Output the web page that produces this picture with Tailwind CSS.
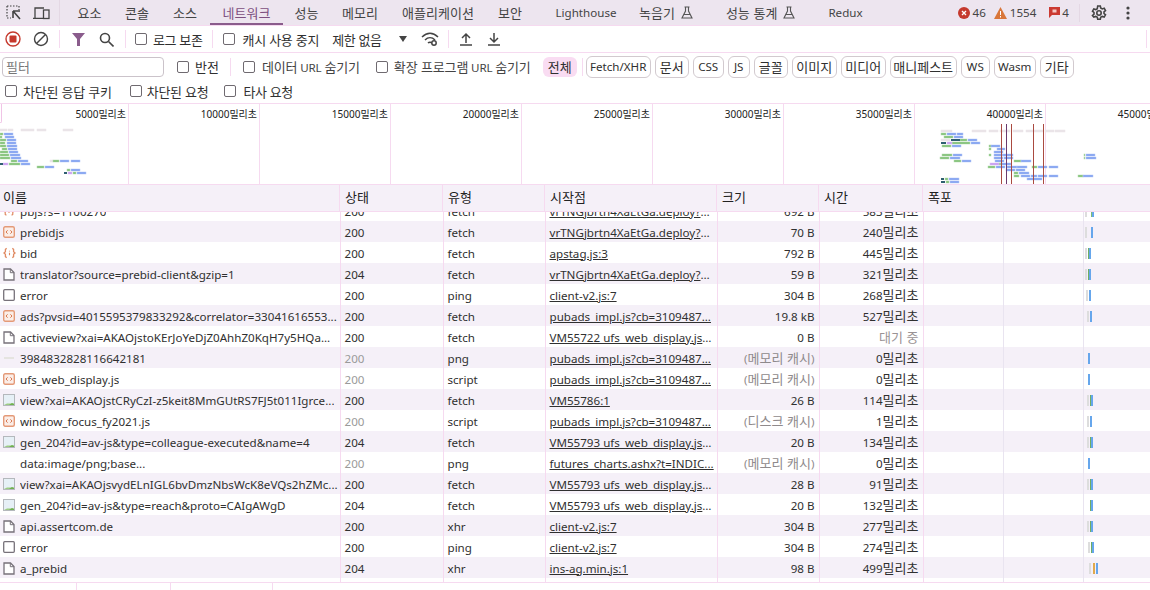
<!DOCTYPE html>
<html lang="ko">
  <head>
    <meta charset="UTF-8" />
    <title>DevTools - 네트워크</title>
    <script src="https://cdn.jsdelivr.net/npm/@tailwindcss/browser@4"></script>
  </head>
  <body class="w-[1150px] h-[590px] overflow-hidden bg-white text-[11.6px] leading-none text-[#303030] font-['Noto_Sans','Noto_Sans_CJK_KR',sans-serif] [&_.k]:text-[13px] [&_.k]:font-['Noto_Sans_CJK_KR',sans-serif]">
    <!-- 아이콘 -->
    <svg class="hidden">
      <symbol id="script" viewBox="0 0 12 12"><rect x="0.7" y="0.7" width="10.6" height="10.6" rx="1.5" fill="#fbeee8" stroke="#e49a78" stroke-width="1.4"/><path d="M4.600 4.300 3 6l1.600 1.700M7.400 4.300 9 6 7.400 7.700" fill="none" stroke="#d9774e" stroke-width="1"/></symbol>
      <symbol id="json" viewBox="0 0 14 12"><path d="M4 1 2.600 2v2.600L1 6l1.600 1.400V10L4 11M10 1l1.400 1v2.600L13 6l-1.600 1.400V10L10 11" fill="none" stroke="#e08a62" stroke-width="1.400"/><path d="M7 3.500v1M7 5.800v2.500" stroke="#e08a62" stroke-width="1.200"/></symbol>
      <symbol id="file" viewBox="0 0 12 13"><path d="M1 1h6.500L11 4.500V12H1z" fill="#fff" stroke="#77727a" stroke-width="1.300"/><path d="M7.300 1v3.700H11" fill="none" stroke="#77727a" stroke-width="1"/></symbol>
      <symbol id="blank" viewBox="0 0 12 12"><rect x="0.7" y="0.7" width="10.6" height="10.6" rx="1" fill="#fff" stroke="#77727a" stroke-width="1.300"/></symbol>
      <symbol id="image" viewBox="0 0 12 12"><rect x="0.5" y="0.5" width="11" height="11" fill="#e6f0f6" stroke="#b4b8bc"/><path d="M1 11 4 9.500 11 9.500V11z" fill="#9ccb83"/><path d="M6 11l3-2 2 1v1z" fill="#6fb04f"/></symbol>
      <symbol id="flask" viewBox="0 0 12 13"><path d="M3.500 1h5M4.500 1v4L1 12h10L7.500 5V1M3 8.500h6" fill="none" stroke="#555" stroke-width="1.100"/></symbol>
    </svg>

    <!-- 탭 -->
    <div class="flex items-center h-[26px] bg-[#ede5ef] border-b border-[#f6daf0] text-[#444]">
      <div class="flex items-center w-[60px] h-full border-r border-[#e4d8e4]">
        <svg class="ml-[6px]" width="16" height="16" viewBox="0 0 16 16" fill="none" stroke="#444"><path d="M1 1h12M1 1v11M1 13h4M13 1v4" stroke-dasharray="1.500 1.500" stroke-width="1.200"/><path d="M7 6h7M7 6v7M7.500 6.500 14 14" stroke-width="1.600"/></svg>
        <svg class="ml-[11px]" width="17" height="14" viewBox="0 0 17 14" fill="none" stroke="#444" stroke-width="1.300"><path d="M2 12V2h9M0 12.300h10"/><rect x="10.500" y="4" width="5.500" height="8.500" fill="#ede5ef"/></svg>
      </div>
      <div class="flex items-center h-full pl-[6px]">
        <div class="k w-[47px] text-center">요소</div>
        <div class="k w-[48px] text-center">콘솔</div>
        <div class="k w-[48px] text-center">소스</div>
        <div class="k flex items-center justify-center w-[73px] ml-[1px] h-full pt-[2px] border-b-2 border-[#8a5c8c] text-[#7d4f80]">네트워크</div>
        <div class="k w-[47px] text-center">성능</div>
        <div class="k w-[60px] text-center">메모리</div>
        <div class="k w-[96px] text-center">애플리케이션</div>
        <div class="k w-[48px] text-center">보안</div>
        <div class="w-[82px] ml-[11px] text-center">Lighthouse</div>
        <div class="flex items-center ml-[12px]"><span class="k">녹음기</span><svg class="ml-[6px]" width="12" height="13"><use href="#flask"/></svg></div>
        <div class="flex items-center ml-[33px]"><span class="k">성능 통계</span><svg class="ml-[6px]" width="12" height="13"><use href="#flask"/></svg></div>
        <div class="ml-[33px]">Redux</div>
      </div>
      <div class="flex items-center ml-auto h-full">
        <svg width="12" height="12" viewBox="0 0 12 12"><circle cx="6" cy="6" r="6" fill="#c5392d"/><path d="M4 4l4 4M8 4l-4 4" stroke="#fff" stroke-width="1.300"/></svg>
        <span class="ml-[3px]">46</span>
        <svg class="ml-[8px]" width="13" height="12" viewBox="0 0 13 12"><path d="M6.500 0 13 12H0z" fill="#d9763a"/><path d="M6.500 4v4M6.500 9v1.500" stroke="#fff"/></svg>
        <span class="ml-[3px]">1554</span>
        <svg class="ml-[13px]" width="11" height="11" viewBox="0 0 11 11"><path d="M0 0h11v8H3l-3 3z" fill="#cb3a32"/><rect x="3.500" y="2.500" width="4" height="3" fill="#f3c9c5"/></svg>
        <span class="ml-[2px] mr-[10px]">4</span>
        <div class="w-px h-[18px] bg-[#e4d8e4]"></div>
        <svg class="ml-[11px]" width="16" height="16" viewBox="0 0 16 16" fill="none" stroke="#444" stroke-width="1.600"><circle cx="8" cy="8" r="2.200"/><path d="M6.700 1h2.600l.4 2 1.600.9 1.900-.7 1.300 2.300-1.500 1.300v1.700l1.500 1.300-1.300 2.300-1.900-.7-1.600.9-.4 2H6.700l-.4-2-1.600-.9-1.900.7L1.500 10.500 3 9.200V7.500L1.500 6.200l1.300-2.300 1.900.7 1.600-.9z"/></svg>
        <svg class="ml-[19px]" width="4" height="14" viewBox="0 0 4 14" fill="#444"><circle cx="2" cy="2" r="1.600"/><circle cx="2" cy="7" r="1.600"/><circle cx="2" cy="12" r="1.600"/></svg>
        <div class="w-[20px]"></div>
      </div>
    </div>

    <!-- 툴바 -->
    <div class="flex items-center h-[27px] border-b border-[#f6daf0]">
      <svg class="ml-[5px]" width="16" height="16" viewBox="0 0 16 16"><circle cx="8" cy="8" r="7" fill="none" stroke="#c5392d" stroke-width="1.400"/><rect x="4.500" y="4.500" width="7" height="7" rx="1" fill="#c5392d"/></svg>
      <svg class="ml-[12px]" width="16" height="16" viewBox="0 0 16 16" fill="none" stroke="#444" stroke-width="1.400"><circle cx="8" cy="8" r="6.500"/><path d="M3.500 12.500 12.500 3.500"/></svg>
      <div class="w-px h-[18px] ml-[10px] bg-[#f6daf0]"></div>
      <svg class="ml-[12px]" width="13" height="13" viewBox="0 0 13 13" fill="#8a5c8c"><path d="M0 0h13L8 6v7H5V6z"/></svg>
      <svg class="ml-[14px]" width="15" height="15" viewBox="0 0 15 15" fill="none" stroke="#444" stroke-width="1.600"><circle cx="6" cy="6" r="4.500"/><path d="m9.500 9.500 5 5"/></svg>
      <div class="w-px h-[18px] ml-[11px] bg-[#f6daf0]"></div>
      <label class="flex items-center ml-[9px]"><input type="checkbox" class="appearance-none w-[12px] h-[12px] border border-[#6f6a70] rounded-[2px]" /><span class="k ml-[6px] tracking-[-0.4px]">로그 보존</span></label>
      <div class="w-px h-[18px] ml-[10px] bg-[#f6daf0]"></div>
      <label class="flex items-center ml-[10px]"><input type="checkbox" class="appearance-none w-[12px] h-[12px] border border-[#6f6a70] rounded-[2px]" /><span class="k ml-[7px] tracking-[-0.3px]">캐시 사용 중지</span></label>
      <span class="k ml-[13px] tracking-[-0.4px]">제한 없음</span>
      <svg class="ml-[17px]" width="8" height="6" viewBox="0 0 8 6" fill="#444"><path d="M0 0h8L4 6z"/></svg>
      <svg class="ml-[14px]" width="18" height="14" viewBox="0 0 18 14" fill="none" stroke="#444" stroke-width="1.500"><path d="M1 5c5-5 11-5 16 0M4 8c3-3 7-3 10 0M7 11c1-1 3-1 4 0"/><circle cx="13" cy="11" r="2.200" fill="#fff"/></svg>
      <div class="w-px h-[18px] ml-[9px] bg-[#f6daf0]"></div>
      <svg class="ml-[11px]" width="12" height="14" viewBox="0 0 12 14" fill="none" stroke="#444" stroke-width="1.500"><path d="M6 11V2M2 6l4-4 4 4M0 13h12"/></svg>
      <svg class="ml-[16px]" width="12" height="14" viewBox="0 0 12 14" fill="none" stroke="#444" stroke-width="1.500"><path d="M6 1v9M2 6l4 4 4-4M0 13h12"/></svg>
      <div class="w-px h-[18px] ml-auto mr-[3px] bg-[#f6daf0]"></div>
    </div>

    <!-- 필터 -->
    <div class="flex items-center h-[25px] mt-[1px]">
      <input placeholder="필터" class="k w-[162px] h-[20px] ml-[2px] px-[3px] border border-[#cbc3ca] rounded-[4px] placeholder:text-[#777]" />
      <input type="checkbox" class="appearance-none w-[12px] h-[12px] ml-[13px] border border-[#6f6a70] rounded-[2px]" />
      <span class="k ml-[6px]">반전</span>
      <div class="w-px h-[18px] ml-[11px] bg-[#f6daf0]"></div>
      <input type="checkbox" class="appearance-none w-[12px] h-[12px] ml-[12px] border border-[#6f6a70] rounded-[2px]" />
      <span class="ml-[7px] text-[#444] tracking-[-0.15px]"><span class="k">데이터</span> URL <span class="k">숨기기</span></span>
      <input type="checkbox" class="appearance-none w-[12px] h-[12px] ml-[16px] border border-[#6f6a70] rounded-[2px]" />
      <span class="ml-[6px] text-[#444] tracking-[-0.15px]"><span class="k">확장 프로그램</span> URL <span class="k">숨기기</span></span>
      <span class="k flex items-center justify-center w-[34px] h-[20px] ml-[12px] rounded-[6px] bg-[#f9dcf2]">전체</span>
      <div class="w-px h-[18px] ml-[5px] bg-[#f6daf0]"></div>
      <div class="flex items-center gap-[4px] ml-[3px] [&>span]:flex [&>span]:items-center [&>span]:justify-center [&>span]:h-[22px] [&>span]:border [&>span]:border-[#d2cacf] [&>span]:rounded-[6px]">
        <span class="w-[65px]">Fetch/XHR</span>
        <span class="k w-[34px]">문서</span>
        <span class="w-[31px]">CSS</span>
        <span class="w-[22px]">JS</span>
        <span class="k w-[34px]">글꼴</span>
        <span class="k w-[45px]">이미지</span>
        <span class="k w-[45px]">미디어</span>
        <span class="k w-[67px]">매니페스트</span>
        <span class="w-[29px]">WS</span>
        <span class="w-[42px]">Wasm</span>
        <span class="k w-[34px]">기타</span>
      </div>
    </div>
    <div class="flex items-center h-[25px] border-b border-[#f6daf0]">
      <input type="checkbox" class="appearance-none w-[12px] h-[12px] ml-[5px] border border-[#6f6a70] rounded-[2px]" />
      <span class="k ml-[6px] tracking-[-0.25px]">차단된 응답 쿠키</span>
      <input type="checkbox" class="appearance-none w-[12px] h-[12px] ml-[18px] border border-[#6f6a70] rounded-[2px]" />
      <span class="k ml-[5px] tracking-[-0.3px]">차단된 요청</span>
      <input type="checkbox" class="appearance-none w-[12px] h-[12px] ml-[16px] border border-[#6f6a70] rounded-[2px]" />
      <span class="k ml-[7px] tracking-[-0.4px]">타사 요청</span>
    </div>

    <!-- 개요 타임라인 -->
    <div class="relative h-[81px] border-b border-[#f6daf0] overflow-hidden">
      <div class="flex h-full text-right text-[10px] text-[#222] [&_.k]:!text-[10px] [&>div]:shrink-0 [&>div]:h-[81px] [&>div]:pt-[5px] [&>div]:pr-[2px] [&>div]:border-r [&>div]:border-[#f6daf0]">
        <div class="w-[129px]">5000<span class="k">밀리초</span></div>
        <div class="w-[131px]">10000<span class="k">밀리초</span></div>
        <div class="w-[131px]">15000<span class="k">밀리초</span></div>
        <div class="w-[131px]">20000<span class="k">밀리초</span></div>
        <div class="w-[131px]">25000<span class="k">밀리초</span></div>
        <div class="w-[131px]">30000<span class="k">밀리초</span></div>
        <div class="w-[131px]">35000<span class="k">밀리초</span></div>
        <div class="w-[131px]">40000<span class="k">밀리초</span></div>
        <div class="w-[131px]">45000<span class="k">밀리초</span></div>
      </div>
      <div class="absolute left-0 top-0 w-[2px] h-[19px] border-r border-b border-[#f0c4e6] rounded-br-[2px]"></div>
      <!-- 요청 막대: x는 화면 좌표, y는 개요 영역 기준 -->
      <svg class="absolute left-0 top-0" width="1150" height="81" stroke-width="0.5">
        <g fill="#eae4e8" stroke="#eae4e8">
          <rect x="0" y="25" width="7" height="2"/><rect x="8" y="25" width="5" height="2"/><rect x="21" y="25" width="13" height="2"/><rect x="37" y="25" width="9" height="2"/><rect x="63" y="25" width="10" height="2"/><rect x="50" y="56" width="3" height="2"/>
          <rect x="941" y="26" width="11" height="2"/><rect x="972" y="26" width="14" height="2"/><rect x="989" y="26" width="9" height="2"/><rect x="1000" y="26" width="10" height="2"/><rect x="1013" y="26" width="10" height="2"/><rect x="1026" y="26" width="7" height="2"/><rect x="1034" y="26" width="9" height="2"/><rect x="1045" y="26" width="9" height="2"/><rect x="1055" y="26" width="10" height="2"/><rect x="941" y="35" width="9" height="2"/>
        </g>
        <g fill="#7fbf74" stroke="#b5dcae">
          <rect x="0" y="29" width="3" height="2"/><rect x="0" y="32" width="2" height="2"/><rect x="0" y="35" width="6" height="2"/><rect x="0" y="38" width="5" height="2"/><rect x="0" y="41" width="6" height="2"/><rect x="2" y="44" width="5" height="2"/><rect x="0" y="47" width="8" height="2"/><rect x="0" y="50" width="9" height="2"/><rect x="0" y="53" width="10" height="2"/><rect x="11" y="56" width="6" height="2"/><rect x="53" y="56" width="6" height="2"/><rect x="9" y="59" width="11" height="2"/><rect x="37" y="62" width="7" height="2"/><rect x="67" y="65" width="3" height="2"/><rect x="73" y="68" width="3" height="2"/>
          <rect x="941" y="29" width="5" height="2"/><rect x="944" y="32" width="9" height="2"/><rect x="960" y="35" width="7" height="2"/><rect x="952" y="38" width="18" height="2"/><rect x="942" y="41" width="9" height="2"/><rect x="989" y="41" width="2" height="2"/><rect x="989" y="44" width="2" height="2"/><rect x="942" y="50" width="10" height="2"/><rect x="989" y="50" width="2" height="2"/><rect x="1084" y="50" width="1" height="2"/><rect x="940" y="53" width="9" height="2"/><rect x="1084" y="53" width="1" height="2"/><rect x="954" y="56" width="7" height="2"/><rect x="1014" y="56" width="7" height="2"/><rect x="999" y="59" width="2" height="2"/><rect x="988" y="62" width="7" height="2"/><rect x="1032" y="62" width="5" height="2"/><rect x="1014" y="68" width="4" height="2"/><rect x="1014" y="71" width="5" height="2"/><rect x="1078" y="71" width="5" height="2"/><rect x="945" y="74" width="3" height="2"/><rect x="946" y="77" width="3" height="2"/>
        </g>
        <g fill="#7f9ff0" stroke="#b5c8f5">
          <rect x="4" y="29" width="9" height="2"/><rect x="5" y="32" width="9" height="2"/><rect x="7" y="35" width="9" height="2"/><rect x="7" y="38" width="9" height="2"/><rect x="7" y="41" width="10" height="2"/><rect x="8" y="44" width="9" height="2"/><rect x="9" y="47" width="9" height="2"/><rect x="10" y="50" width="10" height="2"/><rect x="11" y="53" width="10" height="2"/><rect x="18" y="56" width="10" height="2"/><rect x="60" y="56" width="9" height="2"/><rect x="71" y="56" width="9" height="2"/><rect x="21" y="59" width="9" height="2"/><rect x="45" y="62" width="9" height="2"/><rect x="71" y="65" width="9" height="2"/><rect x="77" y="68" width="9" height="2"/>
          <rect x="947" y="29" width="9" height="2"/><rect x="957" y="29" width="6" height="2"/><rect x="954" y="32" width="9" height="2"/><rect x="968" y="35" width="9" height="2"/><rect x="971" y="38" width="9" height="2"/><rect x="952" y="41" width="9" height="2"/><rect x="991" y="41" width="9" height="2"/><rect x="997" y="44" width="8" height="2"/><rect x="994" y="47" width="9" height="2"/><rect x="953" y="50" width="9" height="2"/><rect x="994" y="50" width="9" height="2"/><rect x="1003" y="50" width="10" height="2"/><rect x="1086" y="50" width="9" height="2"/><rect x="950" y="53" width="10" height="2"/><rect x="994" y="53" width="9" height="2"/><rect x="1004" y="53" width="9" height="2"/><rect x="1086" y="53" width="10" height="2"/><rect x="962" y="56" width="9" height="2"/><rect x="995" y="56" width="9" height="2"/><rect x="1021" y="56" width="10" height="2"/><rect x="1001" y="59" width="10" height="2"/><rect x="996" y="62" width="9" height="2"/><rect x="1007" y="62" width="10" height="2"/><rect x="1017" y="62" width="10" height="2"/><rect x="1038" y="62" width="9" height="2"/><rect x="1049" y="62" width="9" height="2"/><rect x="1006" y="65" width="9" height="2"/><rect x="1016" y="65" width="9" height="2"/><rect x="1019" y="68" width="10" height="2"/><rect x="1021" y="71" width="9" height="2"/><rect x="1031" y="71" width="6" height="2"/><rect x="1038" y="71" width="9" height="2"/><rect x="1049" y="71" width="9" height="2"/><rect x="1083" y="71" width="10" height="2"/><rect x="949" y="74" width="10" height="2"/><rect x="1027" y="74" width="15" height="2"/><rect x="950" y="77" width="9" height="2"/>
        </g>
        <g fill="#c79af0" stroke="#dcc2f5">
          <rect x="3" y="59" width="5" height="2"/><rect x="68" y="68" width="4" height="2"/><rect x="947" y="38" width="5" height="2"/><rect x="990" y="59" width="9" height="2"/>
        </g>
        <g fill="#2f5f70">
          <rect x="0" y="59" width="3" height="2"/><rect x="64" y="68" width="3" height="2"/><rect x="951" y="35" width="9" height="2"/><rect x="941" y="38" width="5" height="2"/><rect x="941" y="74" width="3" height="2"/><rect x="941" y="77" width="4" height="2"/>
        </g>
        <g fill="#aa4a40">
          <rect x="1001" y="20" width="1" height="60"/><rect x="1011" y="20" width="1" height="60"/><rect x="1033" y="20" width="1" height="60"/><rect x="1043" y="20" width="1" height="60"/>
        </g>
        <rect x="1006" y="20" width="1" height="60" fill="#6a3a6e"/>
      </svg>
    </div>

    <!-- 표 헤더 -->
    <div class="flex items-center h-[27px] bg-[#f5f0f8] border-b border-[#f6daf0] text-[#222] [&>div]:flex [&>div]:items-center [&>div]:h-full [&>div]:pb-[3px] [&>div]:border-r [&>div]:border-[#f6daf0] [&>div]:pl-[5px]">
      <div class="k w-[340px] !pl-[3px]">이름</div>
      <div class="k w-[103px]">상태</div>
      <div class="k w-[102px]">유형</div>
      <div class="k w-[172px]">시작점</div>
      <div class="k w-[102px]">크기</div>
      <div class="k w-[104px]">시간</div>
      <div class="k grow !border-r-0">폭포</div>
    </div>

    <!-- 요청 목록 -->
    <div class="relative h-[371px] overflow-hidden border-b border-[#f6daf0]">
      <table class="w-[1150px] -mt-[12px] table-fixed border-collapse leading-[15px] [&_tr]:h-[21px] [&_tr:nth-child(even)]:bg-[#f5f0f8] [&_td]:p-0 [&_td]:pt-[1px] [&_td]:truncate [&_td]:border-r [&_td]:border-[#f6daf0] [&_td:last-child]:border-r-0 [&_td:nth-child(n+2):nth-child(-n+4)]:pl-[4px] [&_td:nth-child(5)]:text-right [&_td:nth-child(5)]:pr-[4px] [&_td:nth-child(6)]:text-right [&_td:nth-child(6)]:pr-[4px] [&_td:nth-child(4)]:underline [&_td:nth-child(4)]:pr-[2px] [&_td:nth-child(1)>div]:flex [&_td:nth-child(1)>div]:items-center [&_td:nth-child(1)>div]:pl-[3px] [&_td:nth-child(1)_span]:ml-[5px] [&_td:nth-child(1)_span]:truncate [&_td:nth-child(1)_svg]:shrink-0 [&_td:last-child>div]:flex [&_td:last-child>div]:h-[11px]">
        <colgroup><col class="w-[340px]"/><col class="w-[103px]"/><col class="w-[102px]"/><col class="w-[172px]"/><col class="w-[102px]"/><col class="w-[104px]"/><col/></colgroup>
        <tbody>
          <tr><td><div><svg width="12" height="12"><use href="#json"/></svg><span>pbjs?s=1100270</span></div></td><td>200</td><td>fetch</td><td>vrTNGjbrtn4XaEtGa.deploy?v...</td><td>692 B</td><td>583<span class="k">밀리초</span></td><td><div class="pl-[161px]"><i class="w-[2px] bg-[#ddd]"></i><i class="w-[1px] ml-[4px] bg-[#7fbf74]"></i><i class="w-[2px] bg-[#66a6ec]"></i></div></td></tr>
          <tr><td><div><svg width="12" height="12"><use href="#script"/></svg><span>prebidjs</span></div></td><td>200</td><td>fetch</td><td>vrTNGjbrtn4XaEtGa.deploy?v...</td><td>70 B</td><td>240<span class="k">밀리초</span></td><td><div class="pl-[161px]"><i class="w-[2px] bg-[#ddd]"></i><i class="w-[2px] ml-[4px] bg-[#66a6ec]"></i></div></td></tr>
          <tr><td><div><svg class="-mr-[1px]" width="13" height="12"><use href="#json"/></svg><span>bid</span></div></td><td>200</td><td>fetch</td><td>apstag.js:3</td><td>792 B</td><td>445<span class="k">밀리초</span></td><td><div class="pl-[161px]"><i class="w-[2px] bg-[#ddd]"></i><i class="w-[1px] ml-[1px] bg-[#6fae63]"></i><i class="w-[2px] bg-[#66a6ec]"></i></div></td></tr>
          <tr><td><div><svg width="12" height="13"><use href="#file"/></svg><span>translator?source=prebid-client&amp;gzip=1</span></div></td><td>204</td><td>fetch</td><td>vrTNGjbrtn4XaEtGa.deploy?v...</td><td>59 B</td><td>321<span class="k">밀리초</span></td><td><div class="pl-[161px]"><i class="w-[2px] bg-[#ddd]"></i><i class="w-[1px] ml-[1px] bg-[#6fae63]"></i><i class="w-[2px] bg-[#66a6ec]"></i></div></td></tr>
          <tr><td><div><svg width="12" height="12"><use href="#blank"/></svg><span>error</span></div></td><td>200</td><td>ping</td><td>client-v2.js:7</td><td>304 B</td><td>268<span class="k">밀리초</span></td><td><div class="pl-[162px]"><i class="w-[2px] bg-[#ddd]"></i><i class="w-[2px] ml-[1px] bg-[#66a6ec]"></i></div></td></tr>
          <tr><td><div><svg width="12" height="12"><use href="#script"/></svg><span>ads?pvsid=4015595379833292&amp;correlator=33041616553...</span></div></td><td>200</td><td>fetch</td><td>pubads_impl.js?cb=3109487...</td><td>19.8 kB</td><td>527<span class="k">밀리초</span></td><td><div class="pl-[163px]"><i class="w-[2px] bg-[#ddd]"></i><i class="w-[2px] ml-[1px] bg-[#66a6ec]"></i></div></td></tr>
          <tr><td><div><svg width="12" height="13"><use href="#file"/></svg><span>activeview?xai=AKAOjstoKErJoYeDjZ0AhhZ0KqH7y5HQa...</span></div></td><td>200</td><td>fetch</td><td>VM55722 ufs_web_display.js:...</td><td>0 B</td><td class="text-[#9a9295]"><span class="k">대기 중</span></td><td></td></tr>
          <tr><td><div><svg width="12" height="12" viewBox="0 0 12 12"><path d="M1 6h10" stroke="#d5d8c8"/></svg><span>3984832828116642181</span></div></td><td class="text-[#9a9a9a]">200</td><td>png</td><td>pubads_impl.js?cb=3109487...</td><td class="text-[#8f8a8c]">(<span class="k">메모리 캐시</span>)</td><td>0<span class="k">밀리초</span></td><td><div class="pl-[164px]"><i class="w-[2px] bg-[#66a6ec]"></i></div></td></tr>
          <tr><td><div><svg width="12" height="12"><use href="#script"/></svg><span>ufs_web_display.js</span></div></td><td class="text-[#9a9a9a]">200</td><td>script</td><td>pubads_impl.js?cb=3109487...</td><td class="text-[#8f8a8c]">(<span class="k">메모리 캐시</span>)</td><td>0<span class="k">밀리초</span></td><td><div class="pl-[164px]"><i class="w-[2px] bg-[#66a6ec]"></i></div></td></tr>
          <tr><td><div><svg width="12" height="12"><use href="#image"/></svg><span>view?xai=AKAOjstCRyCzI-z5keit8MmGUtRS7FJ5t011Igrce...</span></div></td><td>200</td><td>fetch</td><td>VM55786:1</td><td>26 B</td><td>114<span class="k">밀리초</span></td><td><div class="pl-[163px]"><i class="w-[2px] bg-[#ddd]"></i><i class="w-[1px] ml-[1px] bg-[#6fae63]"></i><i class="w-[2px] bg-[#66a6ec]"></i></div></td></tr>
          <tr><td><div><svg width="12" height="12"><use href="#script"/></svg><span>window_focus_fy2021.js</span></div></td><td class="text-[#9a9a9a]">200</td><td>script</td><td>pubads_impl.js?cb=3109487...</td><td class="text-[#8f8a8c]">(<span class="k">디스크 캐시</span>)</td><td>1<span class="k">밀리초</span></td><td><div class="pl-[163px]"><i class="w-[2px] bg-[#ddd]"></i><i class="w-[2px] ml-[1px] bg-[#66a6ec]"></i></div></td></tr>
          <tr><td><div><svg width="12" height="12"><use href="#image"/></svg><span>gen_204?id=av-js&amp;type=colleague-executed&amp;name=4</span></div></td><td>204</td><td>fetch</td><td>VM55793 ufs_web_display.js:...</td><td>20 B</td><td>134<span class="k">밀리초</span></td><td><div class="pl-[163px]"><i class="w-[2px] bg-[#ddd]"></i><i class="w-[1px] ml-[1px] bg-[#6fae63]"></i><i class="w-[2px] bg-[#66a6ec]"></i></div></td></tr>
          <tr><td><div><svg width="12" height="12"></svg><span>data:image/png;base...</span></div></td><td class="text-[#9a9a9a]">200</td><td>png</td><td>futures_charts.ashx?t=INDIC...</td><td class="text-[#8f8a8c]">(<span class="k">메모리 캐시</span>)</td><td>0<span class="k">밀리초</span></td><td><div class="pl-[164px]"><i class="w-[2px] bg-[#66a6ec]"></i></div></td></tr>
          <tr><td><div><svg width="12" height="12"><use href="#image"/></svg><span>view?xai=AKAOjsvydELnIGL6bvDmzNbsWcK8eVQs2hZMc...</span></div></td><td>200</td><td>fetch</td><td>VM55793 ufs_web_display.js:...</td><td>28 B</td><td>91<span class="k">밀리초</span></td><td><div class="pl-[163px]"><i class="w-[2px] bg-[#ddd]"></i><i class="w-[1px] ml-[1px] bg-[#6fae63]"></i><i class="w-[2px] bg-[#66a6ec]"></i></div></td></tr>
          <tr><td><div><svg width="12" height="12"><use href="#image"/></svg><span>gen_204?id=av-js&amp;type=reach&amp;proto=CAIgAWgD</span></div></td><td>204</td><td>fetch</td><td>VM55793 ufs_web_display.js:...</td><td>20 B</td><td>132<span class="k">밀리초</span></td><td><div class="pl-[166px]"><i class="w-[1px] bg-[#6fae63]"></i><i class="w-[2px] bg-[#66a6ec]"></i></div></td></tr>
          <tr><td><div><svg width="12" height="13"><use href="#file"/></svg><span>api.assertcom.de</span></div></td><td>200</td><td>xhr</td><td>client-v2.js:7</td><td>304 B</td><td>277<span class="k">밀리초</span></td><td><div class="pl-[163px]"><i class="w-[2px] bg-[#ddd]"></i><i class="w-[1px] ml-[1px] bg-[#6fae63]"></i><i class="w-[2px] bg-[#66a6ec]"></i></div></td></tr>
          <tr><td><div><svg width="12" height="12"><use href="#blank"/></svg><span>error</span></div></td><td>200</td><td>ping</td><td>client-v2.js:7</td><td>304 B</td><td>274<span class="k">밀리초</span></td><td><div class="pl-[164px]"><i class="w-[2px] bg-[#ddd]"></i><i class="w-[1px] ml-[1px] bg-[#6fae63]"></i><i class="w-[2px] bg-[#66a6ec]"></i></div></td></tr>
          <tr><td><div><svg width="12" height="13"><use href="#file"/></svg><span>a_prebid</span></div></td><td>204</td><td>xhr</td><td>ins-ag.min.js:1</td><td>98 B</td><td>499<span class="k">밀리초</span></td><td><div class="pl-[165px]"><i class="w-[2px] bg-[#ddd]"></i><i class="w-[2px] ml-[2px] bg-[#e0a94e]"></i><i class="w-[2px] ml-[1px] bg-[#66a6ec]"></i></div></td></tr>
          <tr class="!h-[20px]"><td></td><td></td><td></td><td></td><td></td><td></td><td></td></tr>
        </tbody>
      </table>
      <!-- 폭포 눈금선 -->
      <div class="absolute left-[1003px] top-0 w-px h-full bg-[#e9e4f0]"></div>
      <div class="absolute left-[1083px] top-0 w-px h-full bg-[#e9e4f0]"></div>
    </div>

    <!-- 상태 표시줄 -->
    <div class="flex h-[7px] [&>div]:border-r [&>div]:border-[#f6daf0]">
      <div class="w-[77px]"></div>
      <div class="w-[94px]"></div>
      <div class="w-[102px]"></div>
    </div>
  </body>
</html>
